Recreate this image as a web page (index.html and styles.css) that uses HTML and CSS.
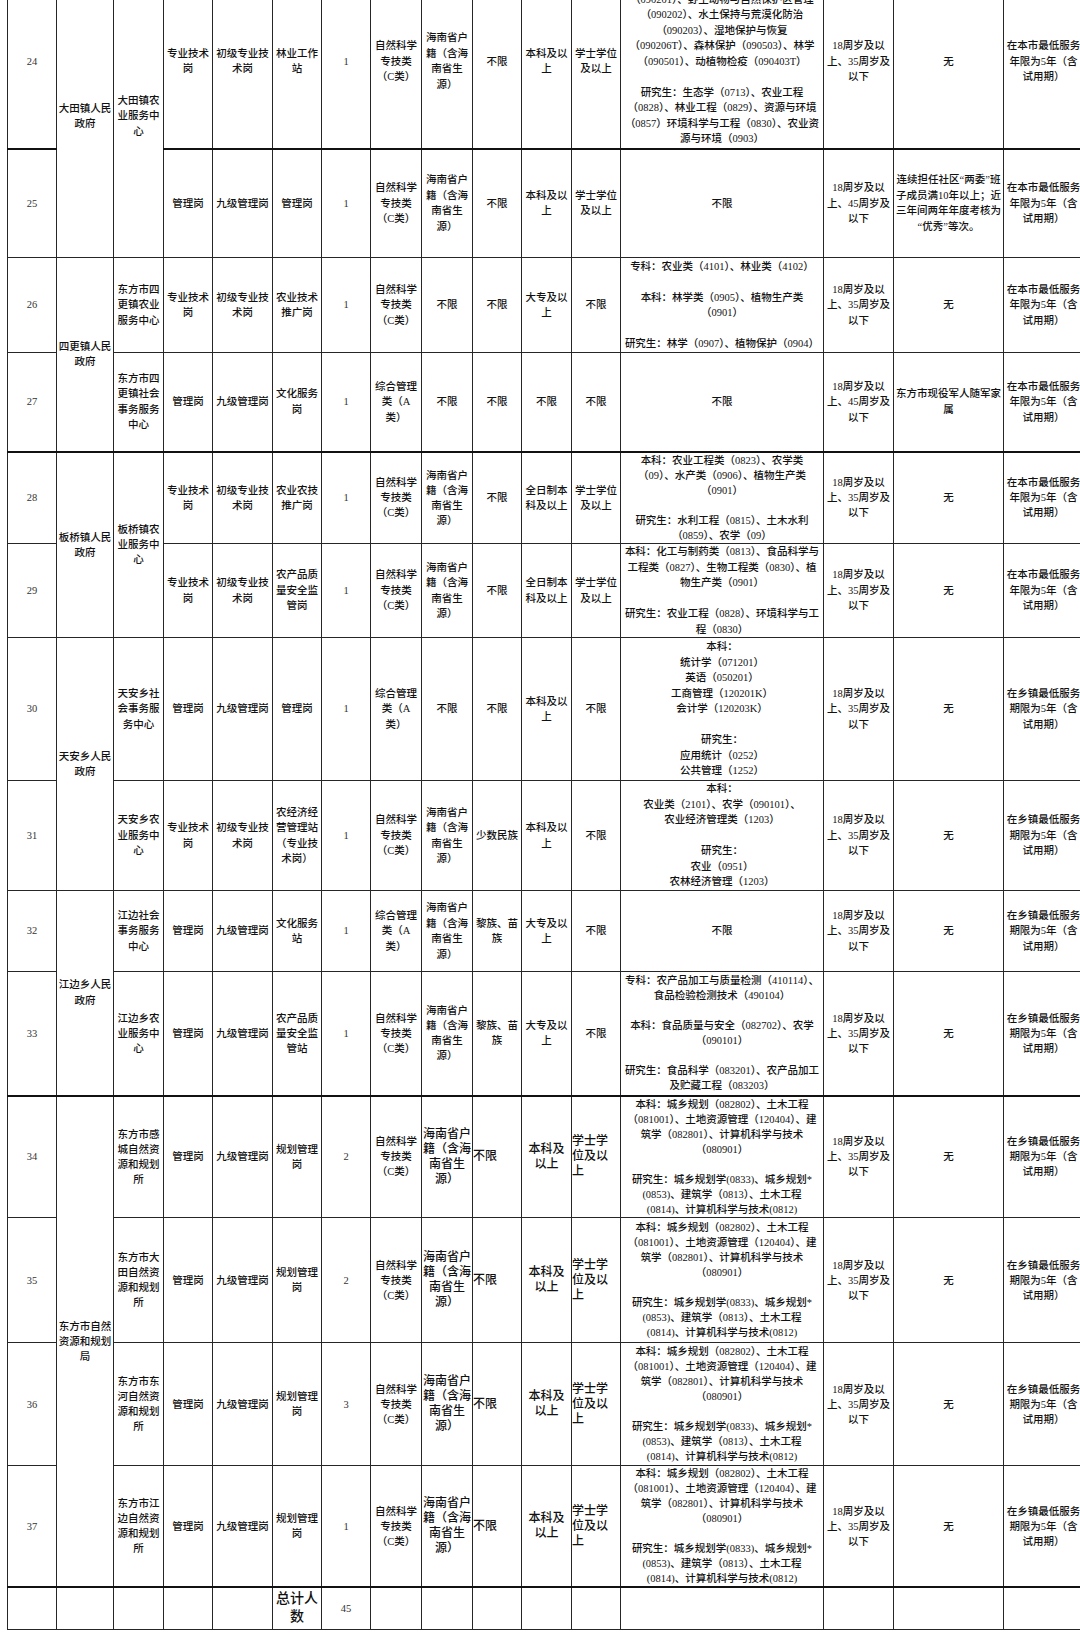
FILE: index.html
```html
<!DOCTYPE html>
<html lang="zh-CN">
<head>
<meta charset="utf-8">
<title>岗位表</title>
<link rel="stylesheet" href="styles.css">
</head>
<body>
<div class="sheet">
<table class="posts">
<colgroup>
<col class="w-no"><col class="w-dept"><col class="w-unit"><col class="w-type"><col class="w-level"><col class="w-name"><col class="w-count"><col class="w-exam"><col class="w-huji"><col class="w-nation"><col class="w-edu"><col class="w-degree"><col class="w-major"><col class="w-age"><col class="w-other"><col class="w-serve">
</colgroup>
<tbody>
<tr class="r24 brk">
<td class="no">24</td>
<td rowspan="2">大田镇人民<br>政府</td>
<td rowspan="2">大田镇农<br>业服务中<br>心</td>
<td>专业技术<br>岗</td>
<td>初级专业技<br>术岗</td>
<td>林业工作<br>站</td>
<td class="no">1</td>
<td>自然科学<br>专技类<br>（C类）</td>
<td>海南省户<br>籍（含海<br>南省生<br>源）</td>
<td>不限</td>
<td>本科及以<br>上</td>
<td>学士学位<br>及以上</td>
<td>本科：林学（090501）、农业资源与环境<br>（090201）、野生动物与自然保护区管理<br>（090202）、水土保持与荒漠化防治<br>（090203）、湿地保护与恢复<br>（090206T）、森林保护（090503）、林学<br>（090501）、动植物检疫（090403T）<br><br>研究生：生态学（0713）、农业工程<br>（0828）、林业工程（0829）、资源与环境<br>（0857）环境科学与工程（0830）、农业资<br>源与环境（0903）</td>
<td>18周岁及以<br>上、35周岁及<br>以下</td>
<td>无</td>
<td>在本市最低服务<br>年限为5年（含<br>试用期）</td>
</tr>
<tr class="r25">
<td class="no">25</td>
<td>管理岗</td>
<td>九级管理岗</td>
<td>管理岗</td>
<td class="no">1</td>
<td>自然科学<br>专技类<br>（C类）</td>
<td>海南省户<br>籍（含海<br>南省生<br>源）</td>
<td>不限</td>
<td>本科及以<br>上</td>
<td>学士学位<br>及以上</td>
<td>不限</td>
<td>18周岁及以<br>上、45周岁及<br>以下</td>
<td>连续担任社区“两委”班<br>子成员满10年以上；近<br>三年间两年年度考核为<br>“优秀”等次。</td>
<td>在本市最低服务<br>年限为5年（含<br>试用期）</td>
</tr>
<tr class="r26">
<td class="no">26</td>
<td rowspan="2" class="cut">四更镇人民<br>政府</td>
<td>东方市四<br>更镇农业<br>服务中心</td>
<td>专业技术<br>岗</td>
<td>初级专业技<br>术岗</td>
<td>农业技术<br>推广岗</td>
<td class="no">1</td>
<td>自然科学<br>专技类<br>（C类）</td>
<td>不限</td>
<td>不限</td>
<td>大专及以<br>上</td>
<td>不限</td>
<td>专科：农业类（4101）、林业类（4102）<br><br>本科：林学类（0905）、植物生产类<br>（0901）<br><br>研究生：林学（0907）、植物保护（0904）</td>
<td>18周岁及以<br>上、35周岁及<br>以下</td>
<td>无</td>
<td>在本市最低服务<br>年限为5年（含<br>试用期）</td>
</tr>
<tr class="r27 brk">
<td class="no">27</td>
<td>东方市四<br>更镇社会<br>事务服务<br>中心</td>
<td>管理岗</td>
<td>九级管理岗</td>
<td>文化服务<br>岗</td>
<td class="no">1</td>
<td>综合管理<br>类（A<br>类）</td>
<td>不限</td>
<td>不限</td>
<td>不限</td>
<td>不限</td>
<td>不限</td>
<td>18周岁及以<br>上、45周岁及<br>以下</td>
<td>东方市现役军人随军家<br>属</td>
<td>在本市最低服务<br>年限为5年（含<br>试用期）</td>
</tr>
<tr class="r28 tight">
<td class="no">28</td>
<td rowspan="2">板桥镇人民<br>政府</td>
<td rowspan="2">板桥镇农<br>业服务中<br>心</td>
<td>专业技术<br>岗</td>
<td>初级专业技<br>术岗</td>
<td>农业农技<br>推广岗</td>
<td class="no">1</td>
<td>自然科学<br>专技类<br>（C类）</td>
<td>海南省户<br>籍（含海<br>南省生<br>源）</td>
<td>不限</td>
<td>全日制本<br>科及以上</td>
<td>学士学位<br>及以上</td>
<td>本科：农业工程类（0823）、农学类<br>（09）、水产类（0906）、植物生产类<br>（0901）<br><br>研究生：水利工程（0815）、土木水利<br>（0859）、农学（09）</td>
<td>18周岁及以<br>上、35周岁及<br>以下</td>
<td>无</td>
<td>在本市最低服务<br>年限为5年（含<br>试用期）</td>
</tr>
<tr class="r29">
<td class="no">29</td>
<td>专业技术<br>岗</td>
<td>初级专业技<br>术岗</td>
<td>农产品质<br>量安全监<br>管岗</td>
<td class="no">1</td>
<td>自然科学<br>专技类<br>（C类）</td>
<td>海南省户<br>籍（含海<br>南省生<br>源）</td>
<td>不限</td>
<td>全日制本<br>科及以上</td>
<td>学士学位<br>及以上</td>
<td>本科：化工与制药类（0813）、食品科学与<br>工程类（0827）、生物工程类（0830）、植<br>物生产类（0901）<br><br>研究生：农业工程（0828）、环境科学与工<br>程（0830）</td>
<td>18周岁及以<br>上、35周岁及<br>以下</td>
<td>无</td>
<td>在本市最低服务<br>年限为5年（含<br>试用期）</td>
</tr>
<tr class="r30">
<td class="no">30</td>
<td rowspan="2">天安乡人民<br>政府</td>
<td>天安乡社<br>会事务服<br>务中心</td>
<td>管理岗</td>
<td>九级管理岗</td>
<td>管理岗</td>
<td class="no">1</td>
<td>综合管理<br>类（A<br>类）</td>
<td>不限</td>
<td>不限</td>
<td>本科及以<br>上</td>
<td>不限</td>
<td>本科：<br>统计学（071201）<br>英语（050201）<br>工商管理（120201K）<br>会计学（120203K）<br><br>研究生：<br>应用统计（0252）<br>公共管理（1252）</td>
<td>18周岁及以<br>上、35周岁及<br>以下</td>
<td>无</td>
<td>在乡镇最低服务<br>期限为5年（含<br>试用期）</td>
</tr>
<tr class="r31">
<td class="no">31</td>
<td>天安乡农<br>业服务中<br>心</td>
<td>专业技术<br>岗</td>
<td>初级专业技<br>术岗</td>
<td>农经济经<br>营管理站<br>（专业技<br>术岗）</td>
<td class="no">1</td>
<td>自然科学<br>专技类<br>（C类）</td>
<td>海南省户<br>籍（含海<br>南省生<br>源）</td>
<td>少数民族</td>
<td>本科及以<br>上</td>
<td>不限</td>
<td>本科：<br>农业类（2101）、农学（090101）、<br>农业经济管理类（1203）<br><br>研究生：<br>农业（0951）<br>农林经济管理（1203）</td>
<td>18周岁及以<br>上、35周岁及<br>以下</td>
<td>无</td>
<td>在乡镇最低服务<br>期限为5年（含<br>试用期）</td>
</tr>
<tr class="r32">
<td class="no">32</td>
<td rowspan="2" class="cut">江边乡人民<br>政府</td>
<td>江边社会<br>事务服务<br>中心</td>
<td>管理岗</td>
<td>九级管理岗</td>
<td>文化服务<br>站</td>
<td class="no">1</td>
<td>综合管理<br>类（A<br>类）</td>
<td>海南省户<br>籍（含海<br>南省生<br>源）</td>
<td>黎族、苗<br>族</td>
<td>大专及以<br>上</td>
<td>不限</td>
<td>不限</td>
<td>18周岁及以<br>上、35周岁及<br>以下</td>
<td>无</td>
<td>在乡镇最低服务<br>期限为5年（含<br>试用期）</td>
</tr>
<tr class="r33 brk tight">
<td class="no">33</td>
<td>江边乡农<br>业服务中<br>心</td>
<td>管理岗</td>
<td>九级管理岗</td>
<td>农产品质<br>量安全监<br>管站</td>
<td class="no">1</td>
<td>自然科学<br>专技类<br>（C类）</td>
<td>海南省户<br>籍（含海<br>南省生<br>源）</td>
<td>黎族、苗<br>族</td>
<td>大专及以<br>上</td>
<td>不限</td>
<td>专科：农产品加工与质量检测（410114）、<br>食品检验检测技术（490104）<br><br>本科：食品质量与安全（082702）、农学<br>（090101）<br><br>研究生：食品科学（083201）、农产品加工<br>及贮藏工程（083203）</td>
<td>18周岁及以<br>上、35周岁及<br>以下</td>
<td>无</td>
<td>在乡镇最低服务<br>期限为5年（含<br>试用期）</td>
</tr>
<tr class="r34 tight">
<td class="no">34</td>
<td rowspan="4" class="cut">东方市自然<br>资源和规划<br>局</td>
<td>东方市感<br>城自然资<br>源和规划<br>所</td>
<td>管理岗</td>
<td>九级管理岗</td>
<td>规划管理<br>岗</td>
<td class="no">2</td>
<td>自然科学<br>专技类<br>（C类）</td>
<td class="big">海南省户<br>籍（含海<br>南省生<br>源）</td>
<td class="big lft">不限</td>
<td class="big">本科及<br>以上</td>
<td class="big lft">学士学<br>位及以<br>上</td>
<td>本科：城乡规划（082802）、土木工程<br>（081001）、土地资源管理（120404）、建<br>筑学（082801）、计算机科学与技术<br>（080901）<br><br>研究生：城乡规划学(0833)、城乡规划*<br>(0853)、建筑学（0813）、土木工程<br>(0814)、计算机科学与技术(0812)</td>
<td>18周岁及以<br>上、35周岁及<br>以下</td>
<td>无</td>
<td>在乡镇最低服务<br>期限为5年（含<br>试用期）</td>
</tr>
<tr class="r35 tight">
<td class="no">35</td>
<td>东方市大<br>田自然资<br>源和规划<br>所</td>
<td>管理岗</td>
<td>九级管理岗</td>
<td>规划管理<br>岗</td>
<td class="no">2</td>
<td>自然科学<br>专技类<br>（C类）</td>
<td class="big">海南省户<br>籍（含海<br>南省生<br>源）</td>
<td class="big lft">不限</td>
<td class="big">本科及<br>以上</td>
<td class="big lft">学士学<br>位及以<br>上</td>
<td>本科：城乡规划（082802）、土木工程<br>（081001）、土地资源管理（120404）、建<br>筑学（082801）、计算机科学与技术<br>（080901）<br><br>研究生：城乡规划学(0833)、城乡规划*<br>(0853)、建筑学（0813）、土木工程<br>(0814)、计算机科学与技术(0812)</td>
<td>18周岁及以<br>上、35周岁及<br>以下</td>
<td>无</td>
<td>在乡镇最低服务<br>期限为5年（含<br>试用期）</td>
</tr>
<tr class="r36 tight">
<td class="no">36</td>
<td>东方市东<br>河自然资<br>源和规划<br>所</td>
<td>管理岗</td>
<td>九级管理岗</td>
<td>规划管理<br>岗</td>
<td class="no">3</td>
<td>自然科学<br>专技类<br>（C类）</td>
<td class="big">海南省户<br>籍（含海<br>南省生<br>源）</td>
<td class="big lft">不限</td>
<td class="big">本科及<br>以上</td>
<td class="big lft">学士学<br>位及以<br>上</td>
<td>本科：城乡规划（082802）、土木工程<br>（081001）、土地资源管理（120404）、建<br>筑学（082801）、计算机科学与技术<br>（080901）<br><br>研究生：城乡规划学(0833)、城乡规划*<br>(0853)、建筑学（0813）、土木工程<br>(0814)、计算机科学与技术(0812)</td>
<td>18周岁及以<br>上、35周岁及<br>以下</td>
<td>无</td>
<td>在乡镇最低服务<br>期限为5年（含<br>试用期）</td>
</tr>
<tr class="r37 brk tight">
<td class="no">37</td>
<td>东方市江<br>边自然资<br>源和规划<br>所</td>
<td>管理岗</td>
<td>九级管理岗</td>
<td>规划管理<br>岗</td>
<td class="no">1</td>
<td>自然科学<br>专技类<br>（C类）</td>
<td class="big">海南省户<br>籍（含海<br>南省生<br>源）</td>
<td class="big lft">不限</td>
<td class="big">本科及<br>以上</td>
<td class="big lft">学士学<br>位及以<br>上</td>
<td>本科：城乡规划（082802）、土木工程<br>（081001）、土地资源管理（120404）、建<br>筑学（082801）、计算机科学与技术<br>（080901）<br><br>研究生：城乡规划学(0833)、城乡规划*<br>(0853)、建筑学（0813）、土木工程<br>(0814)、计算机科学与技术(0812)</td>
<td>18周岁及以<br>上、35周岁及<br>以下</td>
<td>无</td>
<td>在乡镇最低服务<br>期限为5年（含<br>试用期）</td>
</tr>
<tr class="rtotal">
<td></td><td></td><td></td><td></td><td></td>
<td class="total-label">总计人<br>数</td>
<td class="no">45</td>
<td></td><td></td><td></td><td></td><td></td><td></td><td></td><td></td><td></td>
</tr>
</tbody>
</table>
</div>
</body>
</html>
```
FILE: styles.css
```css
html, body {
  margin: 0;
  padding: 0;
  background: #ffffff;
}

body {
  font-family: "Liberation Serif", "Noto Sans CJK SC", serif;
  color: #111111;
}

.sheet {
  width: 1080px;
  height: 1633px;
  overflow: hidden;
}

.posts {
  margin: -26px 0 0 7px;
  width: 1076px;
  table-layout: fixed;
  border-collapse: collapse;
}

.w-no { width: 49px; }
.w-dept { width: 57px; }
.w-unit { width: 50px; }
.w-type { width: 49px; }
.w-level { width: 60px; }
.w-name { width: 49px; }
.w-count { width: 49px; }
.w-exam { width: 51px; }
.w-huji { width: 51px; }
.w-nation { width: 49px; }
.w-edu { width: 50px; }
.w-degree { width: 49px; }
.w-major { width: 203px; }
.w-age { width: 70px; }
.w-other { width: 110px; }
.w-serve { width: 80px; }

.posts td {
  border: 1px solid #262626;
  padding: 0;
  text-align: center;
  vertical-align: middle;
  white-space: nowrap;
  overflow: hidden;
  font-size: 10.5px;
  font-weight: 500;
  line-height: 15.5px;
}

.posts tr.tight td {
  line-height: 15px;
}

.posts td.no {
  font-size: 10.5px;
  font-weight: 400;
  color: #333333;
}

.posts td.big {
  font-size: 12px;
  line-height: 16px;
}

.posts td.lft {
  text-align: left;
}

.posts td.total-label {
  font-size: 14px;
  line-height: 18px;
}

.brk > td:not([rowspan]),
.posts td.cut {
  border-bottom: 2px solid #111111;
}

.r24 { height: 174px; }
.r25 { height: 109px; }
.r26 { height: 95px; }
.r27 { height: 99px; }
.r28 { height: 92px; }
.r29 { height: 94px; }
.r30 { height: 143px; }
.r31 { height: 110px; }
.r32 { height: 81px; }
.r33 { height: 124px; }
.r34 { height: 122px; }
.r35 { height: 125px; }
.r36 { height: 123px; }
.r37 { height: 120px; }
.rtotal { height: 42px; }
```
